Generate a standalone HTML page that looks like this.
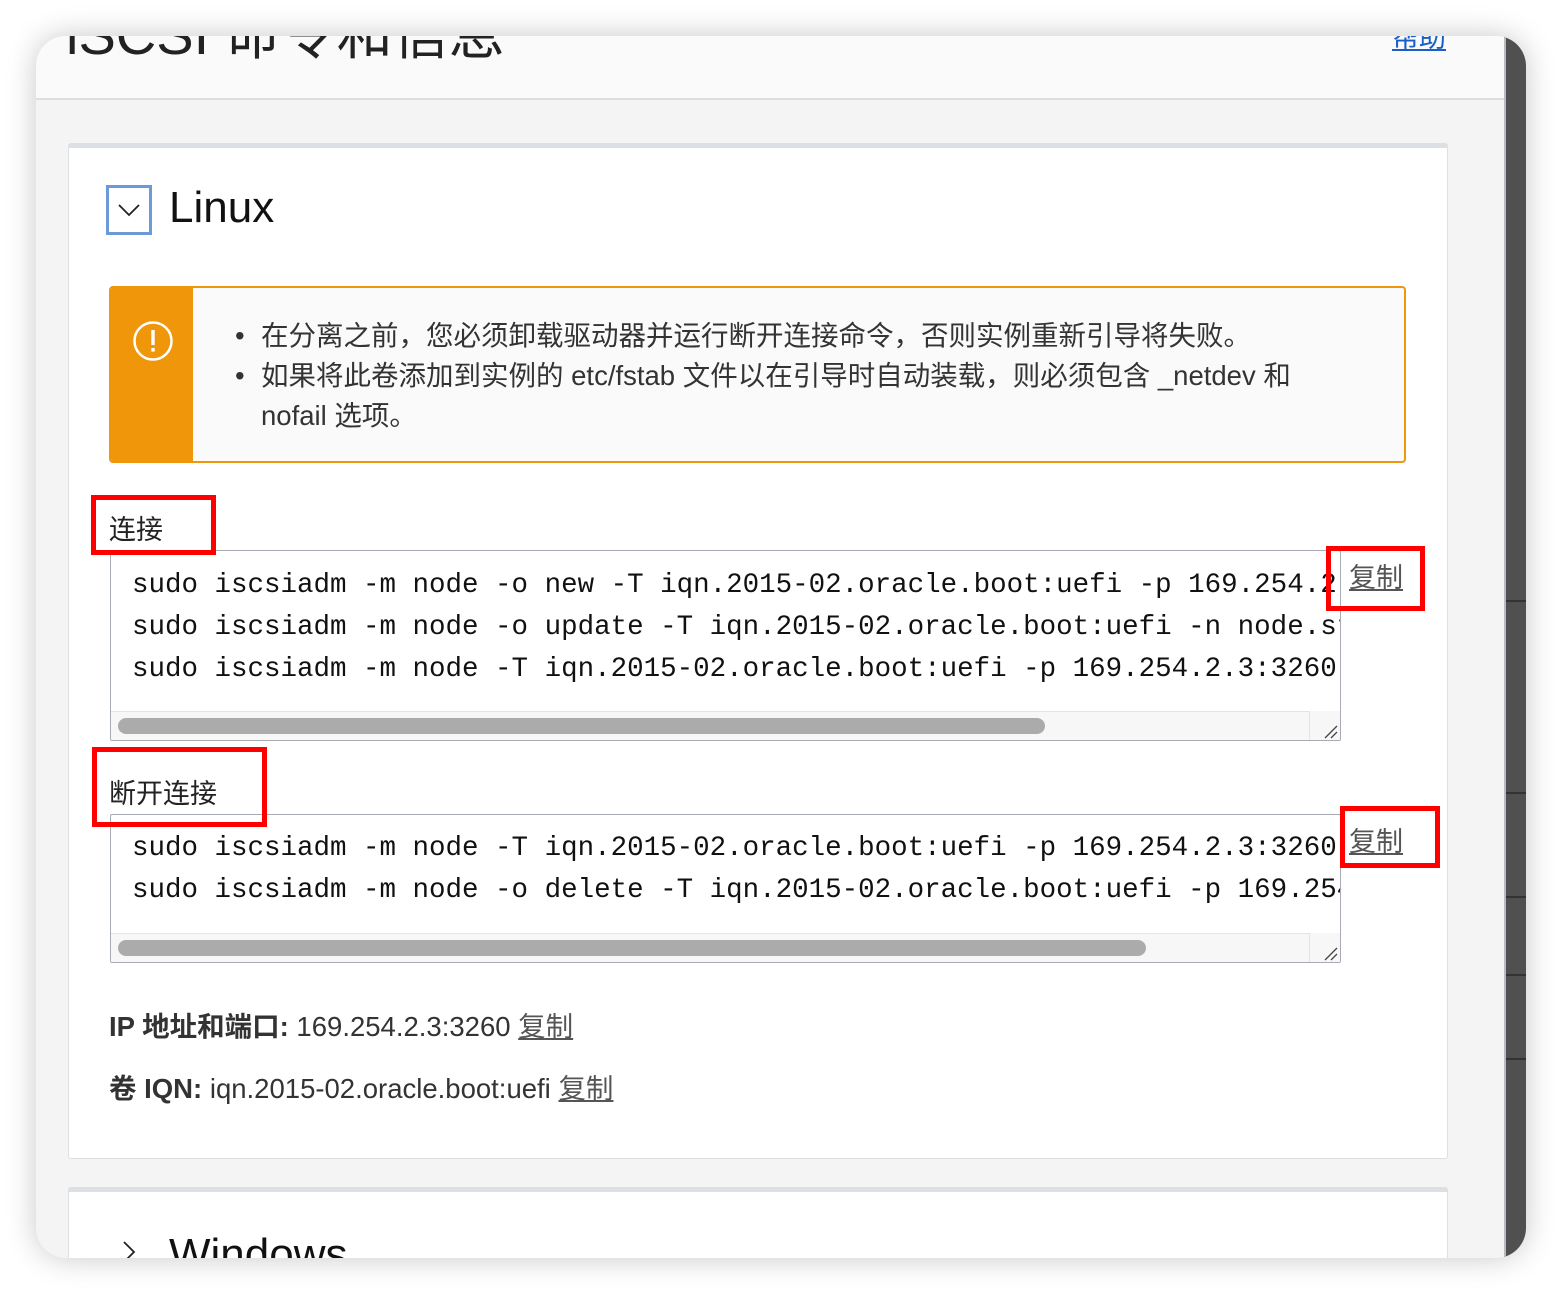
<!DOCTYPE html>
<html><head><meta charset="utf-8"><style>
body{margin:0;width:1562px;height:1294px;background:#fff;position:relative;overflow:hidden;font-family:"Liberation Sans","Noto Sans CJK SC",sans-serif;}
.win{position:absolute;left:36px;top:36px;width:1490px;height:1222px;border-radius:30px;overflow:hidden;background:#f4f4f4;box-shadow:0 0 30px rgba(0,0,0,0.22);}
.hdr{position:absolute;left:0;top:0;width:1468px;height:62px;background:#fafafa;border-bottom:2px solid #dedede;}
.strip{position:absolute;left:1468px;top:0;width:22px;height:1222px;background:#505050;border-left:2px solid #b8bcc2;box-sizing:border-box;}
.abs{position:absolute;}
.card{position:absolute;background:#fff;border:1px solid #dcdfe3;border-top:5px solid #dcdfe3;border-radius:3px;box-sizing:border-box;}
.mono{font-family:"Liberation Mono",monospace;font-size:27.5px;color:#111;white-space:pre;}
.ta{position:absolute;border:1px solid #a7abb2;background:#fff;overflow:hidden;box-sizing:border-box;border-radius:2px;}
.red{position:absolute;border:5px solid #f00;box-sizing:border-box;}
.copy{position:absolute;font-size:27px;color:#555;text-decoration:underline;}
</style></head><body>
<div class="win">
 <div class="hdr">
  <div class="abs" style="left:30px;top:-46px;font-size:56px;color:#222;">iSCSI 命令和信息</div>
  <div class="abs" style="left:1356px;top:-20px;font-size:27px;color:#1a5fc8;text-decoration:underline;">帮助</div>
 </div>
 <div class="strip"></div>
 <div class="abs" style="left:1470px;top:564px;width:20px;height:2px;background:#333"></div>
 <div class="abs" style="left:1470px;top:756px;width:20px;height:2px;background:#333"></div>
 <div class="abs" style="left:1470px;top:860px;width:20px;height:80px;border-top:2px solid #333;border-bottom:2px solid #333;box-sizing:border-box"></div>
 <div class="abs" style="left:1470px;top:1022px;width:20px;height:2px;background:#333"></div>

 <div class="card" style="left:32px;top:107px;width:1380px;height:1016px;">
  <div class="abs" style="left:37px;top:37px;width:46px;height:50px;border:3px solid #6a9ad8;box-sizing:border-box;">
   <svg width="40" height="44" style="position:absolute;left:0;top:0"><path d="M10 17 L20 27 L30 17" fill="none" stroke="#222" stroke-width="1.8"/></svg>
  </div>
  <div class="abs" style="left:100px;top:35px;font-size:44px;color:#111;">Linux</div>

  <div class="abs" style="left:40px;top:138px;width:1297px;height:177px;border:2px solid #f0960a;border-radius:4px;background:#fafafa;box-sizing:border-box;overflow:hidden;">
   <div class="abs" style="left:0;top:0;width:82px;height:177px;background:#f0960a;"></div>
   <svg class="abs" style="left:21px;top:32px" width="42" height="42"><circle cx="21" cy="21" r="18.5" fill="none" stroke="#fff" stroke-width="2.5"/><rect x="19.3" y="10" width="3.4" height="15" fill="#fff"/><rect x="19.3" y="28" width="3.4" height="3.6" fill="#fff"/></svg>
   <div class="abs" style="left:124px;top:28px;font-size:27.5px;line-height:40px;color:#333;width:1090px;">
    <div style="position:relative;padding-left:26px;"><span style="position:absolute;left:0">•</span>在分离之前，您必须卸载驱动器并运行断开连接命令，否则实例重新引导将失败。</div>
    <div style="position:relative;padding-left:26px;"><span style="position:absolute;left:0">•</span>如果将此卷添加到实例的 etc/fstab 文件以在引导时自动装载，则必须包含 _netdev 和<br>nofail 选项。</div>
   </div>
  </div>

  <div class="abs" style="left:40px;top:360px;font-size:27px;color:#222;">连接</div>
  <div class="ta" style="left:41px;top:402px;width:1231px;height:191px;">
   <div class="mono abs" style="left:21px;top:14px;line-height:42px;">sudo iscsiadm -m node -o new -T iqn.2015-02.oracle.boot:uefi -p 169.254.2.3:3260
sudo iscsiadm -m node -o update -T iqn.2015-02.oracle.boot:uefi -n node.startup -v automatic
sudo iscsiadm -m node -T iqn.2015-02.oracle.boot:uefi -p 169.254.2.3:3260 -l</div>
   <div class="abs" style="left:0;top:160px;width:1230px;height:30px;background:#f7f7f7;border-top:1px solid #e4e4e4;"></div>
   <div class="abs" style="left:7px;top:167px;width:927px;height:16px;background:#ababab;border-radius:8px;"></div>
   <div class="abs" style="left:1198px;top:160px;width:32px;height:30px;background:#f7f7f7;border-left:1px solid #e4e4e4;"></div>
   <svg class="abs" style="left:1210px;top:172px" width="18" height="16"><path d="M4 15 L16 3 M10 15 L16 9" stroke="#444" stroke-width="1.3"/></svg>
  </div>
  <div class="copy" style="left:1280px;top:408px;">复制</div>

  <div class="abs" style="left:40px;top:624px;font-size:27px;color:#222;">断开连接</div>
  <div class="ta" style="left:41px;top:666px;width:1231px;height:149px;">
   <div class="mono abs" style="left:21px;top:13px;line-height:42px;">sudo iscsiadm -m node -T iqn.2015-02.oracle.boot:uefi -p 169.254.2.3:3260 -u
sudo iscsiadm -m node -o delete -T iqn.2015-02.oracle.boot:uefi -p 169.254.2.3:3260</div>
   <div class="abs" style="left:0;top:118px;width:1230px;height:30px;background:#f7f7f7;border-top:1px solid #e4e4e4;"></div>
   <div class="abs" style="left:7px;top:125px;width:1028px;height:16px;background:#ababab;border-radius:8px;"></div>
   <div class="abs" style="left:1198px;top:118px;width:32px;height:30px;background:#f7f7f7;border-left:1px solid #e4e4e4;"></div>
   <svg class="abs" style="left:1210px;top:130px" width="18" height="16"><path d="M4 15 L16 3 M10 15 L16 9" stroke="#444" stroke-width="1.3"/></svg>
  </div>
  <div class="copy" style="left:1280px;top:672px;">复制</div>

  <div class="abs" style="left:40px;top:856px;font-size:27.5px;color:#333;"><b>IP 地址和端口:</b> 169.254.2.3:3260 <span style="text-decoration:underline;color:#555">复制</span></div>
  <div class="abs" style="left:40px;top:918px;font-size:27.5px;color:#333;"><b>卷 IQN:</b> iqn.2015-02.oracle.boot:uefi <span style="text-decoration:underline;color:#555">复制</span></div>
 </div>

 <div class="card" style="left:32px;top:1151px;width:1380px;height:120px;">
  <svg class="abs" style="left:50px;top:45px" width="20" height="30"><path d="M5 5 L15 15 L5 25" fill="none" stroke="#222" stroke-width="1.8"/></svg>
  <div class="abs" style="left:100px;top:38px;font-size:44px;color:#111;">Windows</div>
 </div>
</div>
<div class="red" style="left:91px;top:495px;width:125px;height:60px;"></div>
<div class="red" style="left:92px;top:747px;width:175px;height:80px;"></div>
<div class="red" style="left:1326px;top:546px;width:99px;height:65px;"></div>
<div class="red" style="left:1340px;top:806px;width:100px;height:62px;"></div>
</body></html>
